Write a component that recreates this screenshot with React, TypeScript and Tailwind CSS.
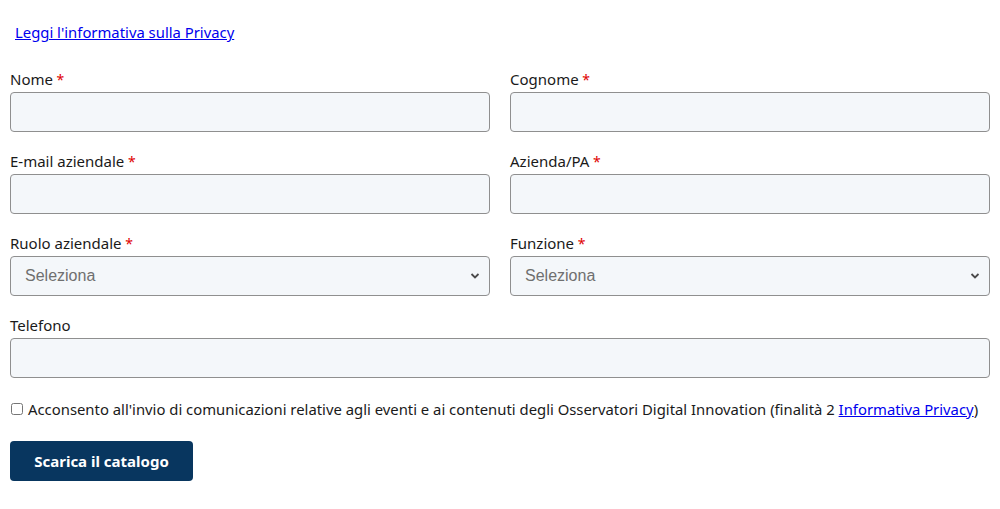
import React from "react";

const Req = () => <span className="text-[#e00000] text-[14px]"> *</span>;

function Field({ label, required, children }: { label: string; required?: boolean; children: React.ReactNode }) {
  return (
    <div className="flex flex-col">
      <label className="h-[20px] leading-[18px] mb-[2px] text-[15px] text-[#1a1a1a]">
        {label}
        {required && <Req />}
      </label>
      {children}
    </div>
  );
}

const inputCls =
  "h-[40px] w-full rounded-[4px] border border-[#8f8f8f] bg-[#f4f7fa] px-[14px] outline-none";

function Select() {
  return (
    <div className="relative">
      <select
        className={inputCls + " appearance-none text-[16px] text-[#6f6f6f]"}
        style={{ fontFamily: '"Liberation Sans", Arial, sans-serif' }}
        defaultValue=""
      >
        <option value="">Seleziona</option>
      </select>
      <svg
        className="pointer-events-none absolute right-[10px] top-[16px]"
        width="10"
        height="8"
        viewBox="0 0 10 8"
      >
        <path d="M1.5 2 L5 5.5 L8.5 2" fill="none" stroke="#4a4a4a" strokeWidth="1.8" />
      </svg>
    </div>
  );
}

export default function App() {
  return (
    <div
      className="w-[1000px] h-[509px] bg-white px-[10px] pt-[22px]"
      style={{ fontFamily: '"Noto Sans", "Open Sans", sans-serif' }}
    >
      <a href="#" className="ml-[5px] block h-[20px] leading-[20px] text-[14.85px] text-[#0000ee] underline w-fit">
        Leggi l'informativa sulla Privacy
      </a>
      <div className="mt-[28px] grid grid-cols-2 gap-x-[20px] gap-y-[20px]">
        <Field label="Nome" required>
          <input className={inputCls} />
        </Field>
        <Field label="Cognome" required>
          <input className={inputCls} />
        </Field>
        <Field label="E-mail aziendale" required>
          <input className={inputCls} />
        </Field>
        <Field label="Azienda/PA" required>
          <input className={inputCls} />
        </Field>
        <Field label="Ruolo aziendale" required>
          <Select />
        </Field>
        <Field label="Funzione" required>
          <Select />
        </Field>
        <div className="col-span-2">
          <Field label="Telefono">
            <input className={inputCls} />
          </Field>
        </div>
      </div>
      <div className="mt-[22px] flex items-center h-[18px] text-[14.85px] text-[#1a1a1a]">
        <input type="checkbox" className="ml-[1px] mr-[5px] h-[12px] w-[12px]" />
        <span>
          Acconsento all'invio di comunicazioni relative agli eventi e ai contenuti degli Osservatori Digital Innovation
          (finalità 2{" "}
          <a href="#" className="text-[#0000ee] underline">
            Informativa Privacy
          </a>
          )
        </span>
      </div>
      <button className="mt-[23px] h-[40px] w-[183px] rounded-[4px] bg-[#08365f] text-[15px] font-bold text-white">
        Scarica il catalogo
      </button>
    </div>
  );
}
